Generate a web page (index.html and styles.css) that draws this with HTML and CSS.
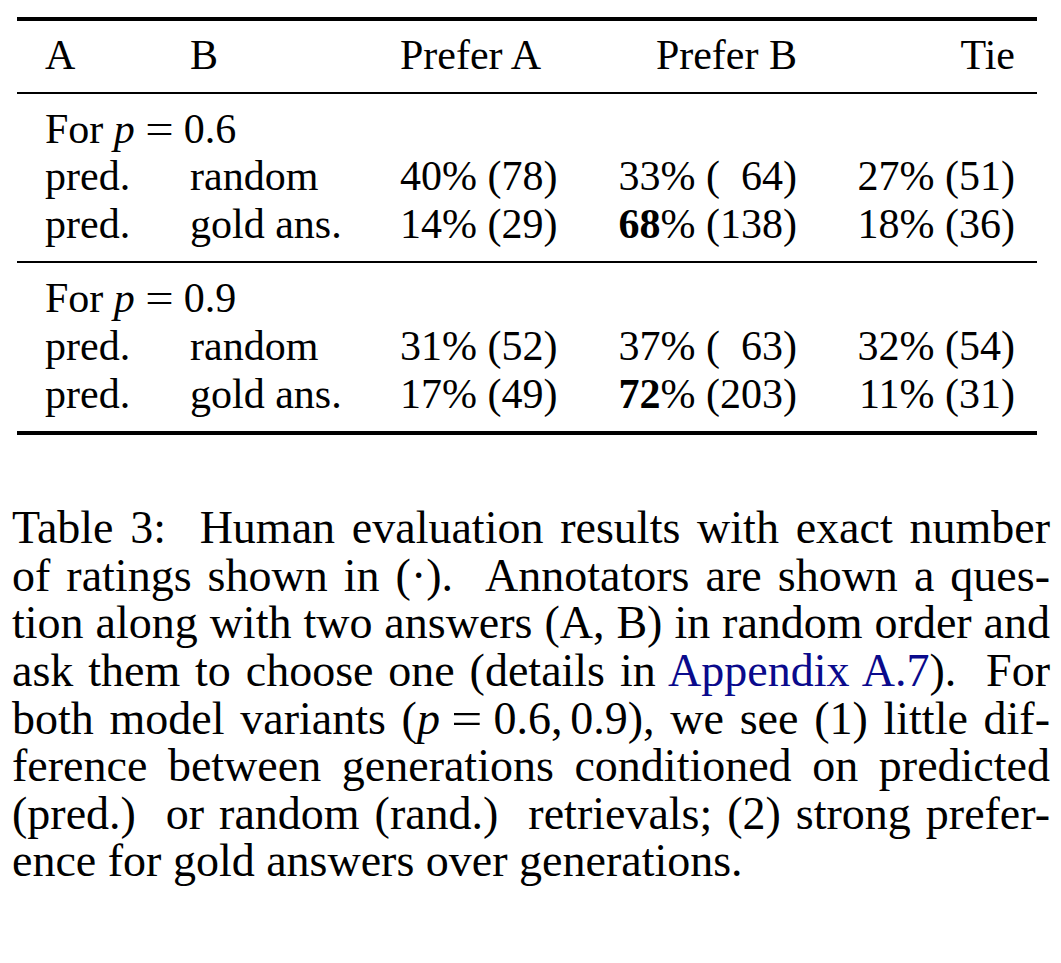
FILE: index.html
```html
<!DOCTYPE html>
<html lang="en">
<head>
<meta charset="utf-8">
<title>Table 3</title>
<link rel="stylesheet" href="styles.css">
</head>
<body>
<div class="page">
  <div class="table">
    <div class="rule heavy"></div>
    <div class="grid head">
      <div class="c1">A</div>
      <div class="c2">B</div>
      <div class="c3">Prefer A</div>
      <div class="c4">Prefer B</div>
      <div class="c5">Tie</div>
    </div>
    <div class="rule light"></div>
    <div class="grid group">
      <div class="label">For <i class="mi">p</i><span class="eq">=</span><span class="num">0.6</span></div>
      <div class="c1">pred.</div>
      <div class="c2">random</div>
      <div class="c3">40% (78)</div>
      <div class="c4">33% (<span class="ph"></span>64)</div>
      <div class="c5">27% (51)</div>
      <div class="c1">pred.</div>
      <div class="c2">gold ans.</div>
      <div class="c3">14% (29)</div>
      <div class="c4"><b>68</b>% (138)</div>
      <div class="c5">18% (36)</div>
    </div>
    <div class="rule light"></div>
    <div class="grid group">
      <div class="label">For <i class="mi">p</i><span class="eq">=</span><span class="num">0.9</span></div>
      <div class="c1">pred.</div>
      <div class="c2">random</div>
      <div class="c3">31% (52)</div>
      <div class="c4">37% (<span class="ph"></span>63)</div>
      <div class="c5">32% (54)</div>
      <div class="c1">pred.</div>
      <div class="c2">gold ans.</div>
      <div class="c3">17% (49)</div>
      <div class="c4"><b>72</b>% (203)</div>
      <div class="c5">11% (31)</div>
    </div>
    <div class="rule heavy"></div>
  </div>
  <div class="caption">
    <span class="line">Table 3: &nbsp;Human evaluation results with exact number</span>
    <span class="line">of ratings shown in (&middot;). &nbsp;Annotators are shown a ques-</span>
    <span class="line">tion along with two answers (A, B) in random order and</span>
    <span class="line">ask them to choose one (details in <a class="ref" href="#">Appendix A.7</a>). &nbsp;For</span>
    <span class="line">both model variants (<i class="mi">p</i><span class="eq">=</span>0.6,<span class="thin"></span>0.9), we see (1) little dif-</span>
    <span class="line">ference between generations conditioned on predicted</span>
    <span class="line">(pred.) &nbsp;or random (rand.) &nbsp;retrievals; (2) strong prefer-</span>
    <span class="line last">ence for gold answers over generations.</span>
  </div>
</div>
</body>
</html>
```
FILE: styles.css
```css
html, body {
  margin: 0;
  padding: 0;
  background: #ffffff;
}
body {
  font-family: "Liberation Serif", "Times New Roman", serif;
  color: #000000;
}
.page {
  width: 1061px;
  height: 963px;
  overflow: hidden;
}
.table {
  margin: 17px 0 0 17px;
  width: 1020px;
}
.rule {
  background: #000000;
}
.rule.heavy {
  height: 4px;
}
.rule.light {
  height: 2px;
}
.grid {
  display: grid;
  grid-template-columns: 145px 210px 200px 197px 218px;
  padding: 0 22px 0 28px;
  font-size: 42px;
  line-height: 47.6px;
}
.head {
  padding-top: 11px;
  padding-bottom: 12px;
}
.group {
  padding-top: 12px;
  padding-bottom: 13px;
}
.label {
  grid-column: 1 / -1;
}
.c1, .c2, .c3 {
  text-align: left;
}
.c4, .c5 {
  text-align: right;
}
.mi {
  font-style: italic;
}
.eq {
  display: inline-block;
  padding: 0 0.3em;
  transform: scaleX(1.2);
}
.ph {
  display: inline-block;
  width: 0.5em;
}
.thin {
  display: inline-block;
  width: 0.17em;
}
b {
  font-weight: bold;
}
.caption {
  margin: 69px 0 0 12px;
  width: 1038px;
  font-size: 46px;
  line-height: 47.6px;
}
.line {
  display: block;
  text-align: justify;
  text-align-last: justify;
  white-space: nowrap;
}
.line.last {
  text-align-last: left;
}
.ref {
  color: #0a0a8c;
  text-decoration: none;
}
```
